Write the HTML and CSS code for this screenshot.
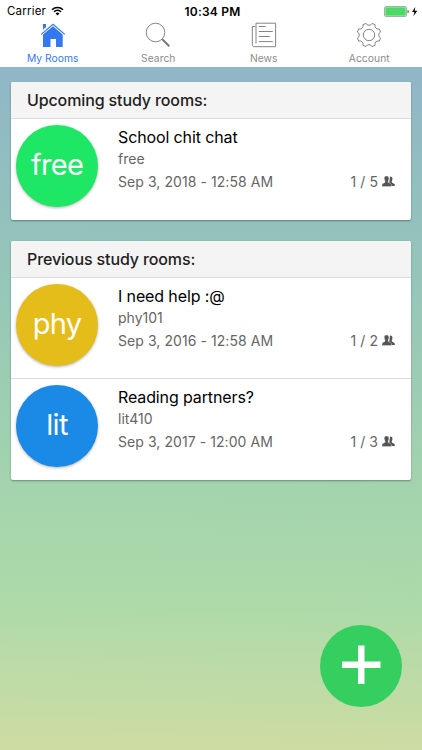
FILE: index.html
```html
<!DOCTYPE html>
<html lang="en">
<head>
    <meta charset="UTF-8">
    <title>My Rooms</title>
    <link rel="stylesheet" href="styles.css">
</head>
<body>
    <svg class="defs" width="0" height="0">
        <symbol id="people" viewBox="0 0 13 11">
            <path d="M8 .6c2 0 2.700 1.300 2.400 3c-.2 1-.7 1.500-.7 2.200c0 1 .7 1.200 1.800 1.600c1 .4 1.400.9 1.400 2.600H9.600c-.2-1.800-1.200-2.200-2.400-2.800z"/>
            <path d="M4.500 0c1.900 0 2.600 1.300 2.400 3.100c-.2 1.200-.8 1.700-.8 2.500c0 1.100.8 1.300 1.900 1.700c1.100.4 1.500 1 1.500 3.200H0c0-2.200.3-2.800 1.400-3.200C2.400 6.900 3.100 6.700 3.100 5.600c0-.8-.6-1.300-.8-2.500C2 1.300 2.600 0 4.500 0z" stroke="#fff" stroke-width=".3"/>
        </symbol>
    </svg>
    <header>
        <div class="status">
            <div class="carrier">
                <span>Carrier</span>
                <svg width="13" height="10" viewBox="0 0 13 10">
                    <path d="M1 3.700a7.800 7.800 0 0 1 11 0M3 5.800a5 5 0 0 1 7 0" fill="none" stroke="#000" stroke-width="1.500"/>
                    <path d="M6.500 9.400L4.600 7.400a2.700 2.700 0 0 1 3.800 0z"/>
                </svg>
            </div>
            <div class="clock">10:34 PM</div>
            <div class="battery">
                <svg width="34" height="11" viewBox="0 0 34 11">
                    <rect x=".5" y=".5" width="22" height="10" rx="1.500" fill="#fff" stroke="#8f9a92" stroke-width=".8"/>
                    <rect x="1.300" y="1.300" width="20.400" height="8.400" rx=".8" fill="#4cd964"/>
                    <path d="M23.600 3.700c1.500.4 1.500 3.200 0 3.600z" fill="#333"/>
                    <path d="M31.300 1L28 6h2.400l-1 4.200L33.300 4.700h-2.600z"/>
                </svg>
            </div>
        </div>
        <nav class="tabs">
            <a class="tab active">
                <svg width="26" height="26" viewBox="0 0 26 26">
                    <path d="M3 2h3v3.200L3 7.800z"/>
                    <path d="M1.200 12.400L13 2.300l11.800 10.100" fill="none" stroke="#3478f0" stroke-width="1.200"/>
                    <path d="M13 4.300L22.700 12.600V25H16v-8h-5.500v8H3V12.600z"/>
                </svg>
                <span>My Rooms</span>
            </a>
            <a class="tab">
                <svg width="26" height="26" viewBox="0 0 26 26" class="line">
                    <circle cx="10.500" cy="10.500" r="9.300"/>
                    <path d="M17.300 17.300L24.300 24.200" stroke-width="1.900"/>
                </svg>
                <span>Search</span>
            </a>
            <a class="tab">
                <svg width="26" height="26" viewBox="0 0 26 26" class="line">
                    <path d="M5 1.200h19.600v23.500H3.200c-1.100 0-1.900-.8-1.900-1.900V4.500H4M5 1.200V21.500M7.800 4.500h7M7.800 9.500h14M7.800 14.500h11M7.800 19.600h14"/>
                </svg>
                <span>News</span>
            </a>
            <a class="tab">
                <svg width="26" height="26" viewBox="-13 -13 26 26" class="line">
                    <circle r="5.700"/>
                    <path d="M-3-11.600A3.300 3.300 0 0 0 3-11.600L6.100-10.300A3.300 3.300 0 0 0 10.300-6.100L11.600-3A3.300 3.300 0 0 0 11.600 3L10.300 6.100A3.300 3.300 0 0 0 6.100 10.300L3 11.600A3.300 3.300 0 0 0-3 11.600L-6.100 10.300A3.300 3.300 0 0 0-10.300 6.100L-11.600 3A3.300 3.300 0 0 0-11.600-3L-10.300-6.100A3.300 3.300 0 0 0-6.100-10.300z" stroke-linejoin="round"/>
                </svg>
                <span>Account</span>
            </a>
        </nav>
    </header>

    <main>
        <section class="card">
            <h2>Upcoming study rooms:</h2>
            <div class="room">
                <div class="circle green">free</div>
                <div class="info">
                    <h3>School chit chat</h3>
                    <p>free</p>
                    <div class="meta">
                        <span class="date">Sep 3, 2018 - 12:58 AM</span>
                        <span class="count">1 / 5 <svg width="13" height="11"><use href="#people"/></svg></span>
                    </div>
                </div>
            </div>
        </section>

        <section class="card">
            <h2>Previous study rooms:</h2>
            <div class="room">
                <div class="circle yellow">phy</div>
                <div class="info">
                    <h3>I need help :@</h3>
                    <p>phy101</p>
                    <div class="meta">
                        <span class="date">Sep 3, 2016 - 12:58 AM</span>
                        <span class="count">1 / 2 <svg width="13" height="11"><use href="#people"/></svg></span>
                    </div>
                </div>
            </div>
            <div class="room">
                <div class="circle blue">lit</div>
                <div class="info">
                    <h3>Reading partners?</h3>
                    <p>lit410</p>
                    <div class="meta">
                        <span class="date">Sep 3, 2017 - 12:00 AM</span>
                        <span class="count">1 / 3 <svg width="13" height="11"><use href="#people"/></svg></span>
                    </div>
                </div>
            </div>
        </section>
    </main>

    <a class="add">
        <svg width="40" height="40" viewBox="0 0 40 40">
            <path d="M17 .5h6.500v16H39.500V23H23.500v16H17V23H1v-6.500h16z" fill="#fff"/>
        </svg>
    </a>
</body>
</html>
```

FILE: styles.css
```css
* {
    box-sizing: border-box;
}
body {
    margin: 0;
    height: 750px;
    overflow: hidden;
    font-family: Inter, "Liberation Sans", sans-serif;
    color: #000;
    background: linear-gradient(181deg, #90b5c8 8%, #93c3bb 32%, #a3d4ad 65%, #aedaa9 81%, #cddca3 99%);
}
h2, h3, p {
    margin: 0;
    font-weight: 400;
}
svg {
    display: block;
}
.defs {
    position: absolute;
}
header {
    height: 67px;
    background: #fff;
}
.status {
    display: grid;
    grid-template-columns: 1fr auto 1fr;
    align-items: center;
    height: 22px;
    padding: 0 4px 0 7px;
    font-size: 11.5px;
}
.carrier {
    display: flex;
    align-items: center;
    gap: 5px;
    letter-spacing: 0.2px;
}
.clock {
    font-weight: 600;
    font-size: 12px;
    letter-spacing: 0.2px;
}
.battery {
    justify-self: end;
}
.tabs {
    display: grid;
    grid-template-columns: repeat(4, 1fr);
}
.tab {
    display: flex;
    flex-direction: column;
    align-items: center;
    font-size: 10.3px;
    line-height: 14px;
    letter-spacing: 0.05px;
    color: #8c8c8c;
}
.tab span {
    margin-top: 3px;
}
.tab.active {
    color: #3478f0;
    fill: #3478f0;
}
.line {
    fill: none;
    stroke: #777;
    stroke-width: 0.9;
}
main {
    display: flex;
    flex-direction: column;
    gap: 21px;
    padding: 15px 11px 0;
}
.card {
    background: #fff;
    border-radius: 2px;
    box-shadow: 0 1px 2px rgba(0,0,0,0.35);
}
.card h2 {
    height: 37px;
    padding-left: 16px;
    background: #f4f4f4;
    border-bottom: 1px solid #dcdcdc;
    border-radius: 2px 2px 0 0;
    font-size: 16px;
    line-height: 37px;
    font-weight: 500;
    letter-spacing: -0.12px;
    color: #222;
}
.room {
    display: flex;
    gap: 20px;
    height: 101px;
    padding: 6px 16px 0 5px;
}
.room + .room {
    height: 102px;
    margin-top: -1px;
    border-top: 1px solid #dcdcdc;
}
.circle {
    flex: none;
    width: 82px;
    height: 82px;
    border-radius: 50%;
    box-shadow: 0 1px 3px rgba(0,0,0,0.3);
    color: #fff;
    font-size: 29px;
    line-height: 79px;
    letter-spacing: -0.7px;
    text-align: center;
}
.green {
    background: #1de765;
}
.yellow {
    background: #e4bd1b;
}
.blue {
    background: #1b89e6;
}
.info {
    flex: 1;
    padding-top: 1px;
}
.info h3 {
    font-size: 16px;
    line-height: 22px;
    letter-spacing: -0.12px;
}
.info p {
    font-size: 14px;
    line-height: 22px;
    color: #666;
}
.meta {
    display: flex;
    justify-content: space-between;
    font-size: 14px;
    line-height: 23px;
    letter-spacing: 0.07px;
    color: #666;
}
.count {
    display: flex;
    align-items: center;
    gap: 4px;
    fill: #555;
}
.add {
    position: absolute;
    left: 320px;
    top: 625px;
    width: 82px;
    height: 82px;
    border-radius: 50%;
    background: #35cf60;
    display: flex;
    align-items: center;
    justify-content: center;
    padding-bottom: 3px;
}
```
